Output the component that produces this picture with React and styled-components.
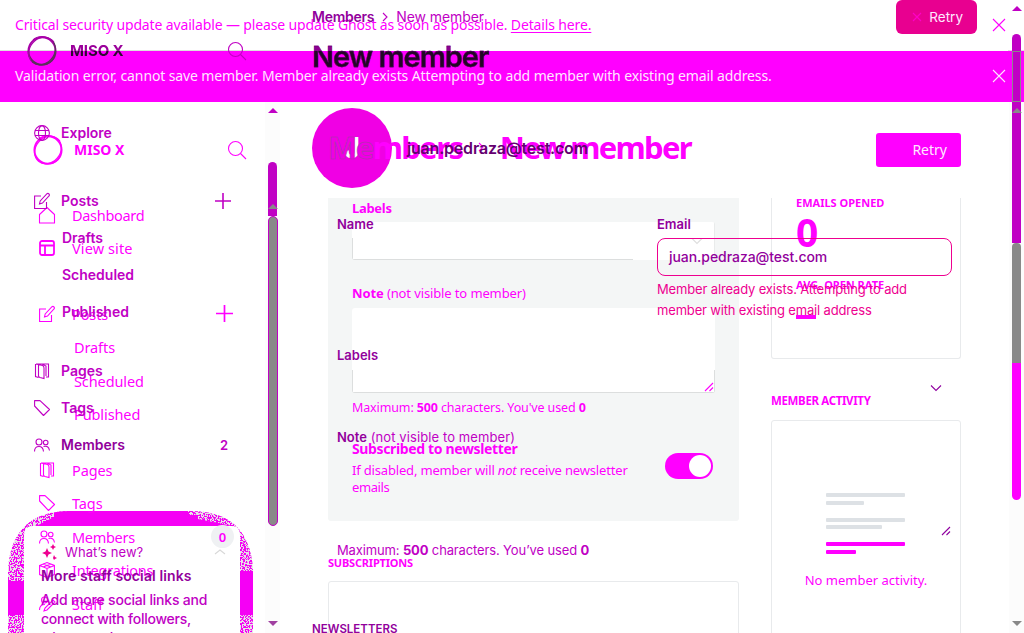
import React from "react";
import styled, { createGlobalStyle } from "styled-components";

const HOT = "#ff00ff";
const PLUM = "#c000c4";
const DEEP = "#92009c";
const ROSE = "#ee0090";

const Global = createGlobalStyle`
  *{box-sizing:border-box}
  html,body{margin:0;height:633px;overflow:hidden;background:#fff}
  h1,h2,p{margin:0}
`;
const Stage = styled.div`position:relative;width:1024px;height:633px;overflow:hidden;background:#fff;`;
const Layer = styled.div`position:absolute;inset:0;display:flex;overflow:hidden;
  flex-direction:${p => (p.$column ? "column" : "row")};
  font-family:${p => (p.$inter ? 'Inter, "Liberation Sans", sans-serif' : '"Noto Sans", "Open Sans", sans-serif')};
  color:${p => (p.$inter ? PLUM : HOT)};`;
const Text = styled.span`font-size:${p => p.$size || 14}px;font-weight:${p => p.$weight || 400};
  letter-spacing:${p => p.$track || 0}px;color:${p => p.$color || "inherit"};white-space:nowrap;
  line-height:${p => p.$line || 20}px;`;
const Svg = styled.svg`display:block;flex:none;overflow:visible;fill:none;stroke:currentColor;stroke-width:${p => p.$w || 1.1};`;

/* banners */
const Alert = styled.div`height:51px;flex:none;display:flex;align-items:center;justify-content:space-between;
  padding:0 19px ${p => (p.$solid ? 2 : 2)}px 15px;color:${p => (p.$solid ? "#ffe6ff" : HOT)};
  background:${p => (p.$solid ? HOT : "linear-gradient(#dedede,#dedede) 0 100%/280px 1px no-repeat,linear-gradient(#dedede,#dedede) 100% 100%/16px 1px no-repeat,#fff")};`;
const Link = styled.u`text-underline-offset:2px;text-decoration-thickness:1px;`;
const Body = styled.div`display:flex;flex:1;min-height:0;`;

/* sidebars */
const Side = styled.aside`width:280px;flex:none;display:flex;flex-direction:column;border-right:1px solid ${p => (p.$line ? "#e6e6e6" : "transparent")};`;
const SideHead = styled.div`height:${p => p.$h}px;flex:none;display:flex;align-items:center;padding:0 ${p => p.$right}px 0 ${p => p.$left}px;
  & > :last-child{margin-left:auto;}`;
const Brand = styled(Text)`margin-left:${p => p.$gap}px;`;
const SplitBrand = styled(Brand)`background:linear-gradient(#9a009a 50%,#2c0a30 50%);background-clip:text;color:transparent;`;
const Group = styled.nav`padding:0 ${p => p.$right}px 0 ${p => p.$left}px;margin-top:${p => p.$top || 0}px;`;
const Item = styled.div`height:${p => p.$h}px;display:flex;align-items:center;padding-left:${p => p.$inset || 0}px;
  gap:${p => p.$gap || 0}px;& > .end{margin-left:auto;}`;
const Badge = styled.div`width:23px;height:23px;border-radius:50%;background:#eff1f3;display:flex;align-items:center;justify-content:center;
  margin-right:2px;`;
const Remnant = styled.div`width:14px;height:3px;margin:0 0 13px 35px;background:#a800b0;border-radius:0 0 3px 3px;`;
const News = styled.section`margin-top:63px;padding:16px 54px 0 41px;display:flex;flex-direction:column;`;
const NewsHead = styled.div`display:flex;align-items:center;gap:8px;height:20px;margin-bottom:4px;& > :last-child{margin-left:auto;}`;
const Glow = styled.svg`position:absolute;left:8px;top:511px;`;

/* page with the newsletter panel */
const Main = styled.main`flex:1;min-width:0;padding:0 63px 0 48px;`;
const Head = styled.header`height:96px;display:flex;align-items:center;justify-content:space-between;`;
const Title = styled.h1`margin:0 0 6px;display:flex;align-items:center;gap:13px;font-size:31px;line-height:40px;font-weight:700;letter-spacing:-1.55px;white-space:nowrap;`;
const Tight = styled.span`letter-spacing:-1.75px;margin-left:1px;`;
const Etched = styled.span`color:#ee00e4;-webkit-text-stroke:0.6px #a040a0;`;
const Button = styled.div`width:${p => p.$w}px;height:34px;border-radius:${p => p.$r}px;background:${p => p.$bg};color:#ffe8ff;
  display:flex;align-items:center;justify-content:space-between;padding:0 14px 0 ${p => p.$left}px;`;
const Columns = styled.div`display:grid;grid-template-columns:411px 190px;column-gap:32px;`;
const Panel = styled.section`height:323px;background:#f4f6f6;border-radius:0 0 3px 3px;padding:0 24px;display:flex;flex-direction:column;`;
const Field = styled.div`height:38px;margin:4px 0 23px;background:
  linear-gradient(#dcdede,#dcdede) 0 100%/281px 1px no-repeat,linear-gradient(#dcdede,#dcdede) 0 100%/1px 22px no-repeat,
  linear-gradient(#e9ebeb,#e9ebeb) 100% 0/1px 37px no-repeat,#fff;border-radius:3px;
  display:flex;align-items:center;justify-content:flex-end;padding-right:13px;color:#dedede;`;
const Area = styled.div`height:85px;margin:5px 0 5px;background:linear-gradient(#dcdede,#dcdede) 0 100%/100% 1px no-repeat,
  linear-gradient(#dcdede,#dcdede) 0 100%/1px 23px no-repeat,linear-gradient(#dcdede,#dcdede) 100% 100%/1px 23px no-repeat,#fff;
  border-radius:3px;display:flex;align-items:flex-end;justify-content:flex-end;padding:2px;`;
const SwitchRow = styled.div`margin-top:21px;display:flex;justify-content:space-between;`;
const Stack = styled.div`display:flex;flex-direction:column;`;
const Toggle = styled.div`width:48px;height:26px;margin:14px 2px 0 0;border-radius:13px;background:${HOT};padding:2px;display:flex;justify-content:flex-end;
  &::after{content:"";width:22px;height:22px;border-radius:50%;background:#fff;}`;
const Caption = styled(Text)`display:block;margin-top:${p => p.$top || 0}px;`;
const Card = styled.div`border:1px solid #e8eaec;height:${p => p.$h}px;border-top-width:${p => (p.$open ? 0 : 1)}px;
  border-radius:${p => (p.$open ? "0 0 3px 3px" : "3px")};padding:0 24px;margin-top:${p => p.$top || 0}px;
  display:flex;flex-direction:column;align-items:${p => (p.$center ? "center" : "flex-start")};`;
const Dash = styled.div`width:20px;height:4px;background:${HOT};margin-top:20px;`;
const Lines = styled.div`width:79px;height:60px;margin:72px 2px 17px 0;display:flex;flex-direction:column;`;
const Bar = styled.i`height:4px;flex:none;width:${p => p.$w}px;margin-bottom:${p => p.$gap}px;background:${p => p.$hot ? HOT : "#dde1e5"};border-radius:1px;`;

/* page with the two-column form */
const Form = styled.main`flex:1;min-width:0;padding:0 47px 0 32px;display:flex;flex-direction:column;`;
const FormTop = styled.div`display:flex;justify-content:space-between;height:108px;flex:none;`;
const Crumbs = styled.div`display:flex;align-items:center;height:20px;gap:6px;margin-top:7px;`;
const FormTitle = styled.h1`font-size:29px;font-weight:600;letter-spacing:-1px;line-height:34px;margin-top:13px;white-space:nowrap;
  background:linear-gradient(#8c0090 11px,#220626 11px);background-clip:text;color:transparent;-webkit-text-stroke:0.3px #60006a;`;
const Person = styled.div`display:flex;align-items:center;height:80px;flex:none;padding-left:${p => p.$inset || 0}px;`;
const Avatar = styled.div`width:80px;height:80px;border-radius:50%;background:#f000e4;color:#fff;display:flex;align-items:center;justify-content:center;
  font:600 28px Inter,sans-serif;`;
const AvatarLayer = styled.div`position:absolute;left:312px;top:108px;`;
const Fields = styled.div`display:grid;grid-template-columns:295px 295px;column-gap:25px;padding-left:25px;margin-top:26px;height:131px;flex:none;`;
const EmailInput = styled.div`height:38px;width:295px;margin:4px 0 3px;border:1px solid ${ROSE};border-radius:8px;display:flex;align-items:center;padding-left:11px;`;
const Row = styled.div`flex:none;height:${p => p.$h}px;padding:0 ${p => p.$r || 0}px 0 25px;display:flex;justify-content:space-between;`;
const Handle = styled.div`padding-top:${p => p.$t}px;color:#9000a0;`;

/* scrollbars */
const Rail = styled.div`position:absolute;top:${p => p.$top}px;bottom:0;left:${p => p.$x}px;width:15px;background:${p => (p.$clear ? "transparent" : "#fcfcfc")};
  display:flex;flex-direction:column;align-items:center;`;
const Tip = styled.i`width:0;height:0;border:5px solid transparent;border-top-width:${p => (p.$down ? 5 : 0)}px;border-bottom-width:${p => (p.$down ? 0 : 5)}px;
  border-${p => (p.$down ? "top" : "bottom")}-color:${p => p.$c};margin-top:${p => p.$t}px;flex:none;`;
const Thumb = styled.i`width:${p => p.$w || 9}px;height:${p => p.$h}px;margin-top:${p => p.$t || 0}px;flex:none;background:${p => p.$c};
  border-radius:${p => p.$r || "0"};border:${p => p.$edge || "0"};`;

const Cross = ({ s = 12 }) => <Svg width={s} height={s} viewBox="0 0 12 12"><path d="M0 0L12 12M12 0L0 12" /></Svg>;
const Search = () => <Svg width="18" height="18" viewBox="0 0 18 18"><circle cx="7.5" cy="7.5" r="7" /><path d="M12.5 12.5L18 18" /></Svg>;
const Plus = ({ s = 17 }) => <Svg className="end" width={s} height={s} viewBox="0 0 17 17" $w="1.7"><path d="M8.5 0V17M0 8.5H17" /></Svg>;
const Chevron = ({ d = "down" }) => <Svg width="10" height="10" viewBox="0 0 10 10"><path d={{ down: "M0 2.5L5 7.5L10 2.5", right: "M3 1L7 5L3 9" }[d]} /></Svg>;
const Grip = () => <Svg width="8" height="8" viewBox="0 0 8 8"><path d="M0 8L8 0M4.5 8L8 4.5" /></Svg>;
const Logo = ({ split }) => (
  <Svg width="30" height="30" viewBox="0 0 30 30">
    <defs><linearGradient id="ink" gradientUnits="userSpaceOnUse" x1="0" y1="0" x2="0" y2="30"><stop offset=".5" stopColor="#a800a8" /><stop offset=".5" stopColor="#5c305c" /></linearGradient></defs>
    <g stroke={split ? "url(#ink)" : HOT}>
      <circle cx="15" cy="15" r="13.6" strokeWidth="1.9" />
      <ellipse cx="15" cy="15" rx="14.7" ry="12.3" strokeWidth="1.2" transform="rotate(-50 15 15)" />
      <path d="M6 4C11 -1 20 -1 27 6M4 24C10 31 22 31 27 22" strokeWidth="1.1" />
    </g>
  </Svg>
);
const shapes = {
  home: <path d="M.5 16V7.5L8 .5L15.500 7.500V16Z" strokeLinejoin="round" />,
  site: <><rect x="1" y="1" width="14" height="14" rx="2" /><path d="M1 5.500H15M6 5.500V15" /></>,
  pen: <path d="M7 3H.6V15.500H12.500V9M5.500 11L6.200 8L13 .7Q14 0 15 1Q16 2 15 3L8.500 10Z" />,
  pages: <path d="M2 1H14.500V14H12M1.500 1V13.500L4.500 14.500M2 1L8.500 2.500Q10 3 10 5V15.500L6 14.500Q4.500 14 4.500 13V1.500M8 1L12 3V13" />,
  tag: <path d="M.6 .6H6L15.500 9.500L9.500 15.500L.6 6Z" strokeLinejoin="round" />,
  people: <><circle cx="5" cy="5" r="3" /><circle cx="11.700" cy="5.500" r="2.300" /><path d="M.5 14.500Q.5 9.500 5 9.500Q9 9.500 9.500 14.500M9.500 9.500Q14.500 8 15.500 13.500" /></>,
  cube: <path d="M.6 3.500L8 .6L15.400 3.500V12.500L8 15.400L.6 12.500ZM.6 3.500L8 6.500L15.400 3.500M8 6.500V15.400M4 2L12 5M12 2L4 5" />,
  staff: <><circle cx="5.500" cy="4" r="3" /><path d="M.5 14Q.5 8.500 6 8.500M5 15L6 12L14 4L16 6L8 14Z" /></>,
  globe: <><circle cx="8" cy="8" r="7.400" /><ellipse cx="8" cy="8" rx="3.500" ry="7.400" /><path d="M1 5.500H15M1 10.500H15" /></>,
};
const Icon = ({ name, w }) => <Svg width="16" height="16" viewBox="0 0 16 16" $w={w}>{shapes[name]}</Svg>;

const NavA = ({ icon, label, children, track = -0.1, w }) => (
  <Item $h={33.5} $gap={icon ? 17 : 0} $inset={icon ? 0 : 35}>{icon && <Icon name={icon} w={w} />}<Text $size={14.5} $track={track}>{label}</Text>{children}</Item>
);
const NavB = ({ icon, label, children, color }) => (
  <Item $h={37} $gap={icon ? 11 : 0} $inset={icon ? 0 : 28}>{icon && <Icon name={icon} />}<Text $weight={600} $color={color}>{label}</Text>{children}</Item>
);

const CardGlow = () => (
  <Glow width="245" height="122" viewBox="0 0 245 122">
    <defs>
      <filter id="grain" x="0" y="0" width="100%" height="100%">
        <feTurbulence type="fractalNoise" baseFrequency="0.75" numOctaves="2" seed="4" result="n" />
        <feColorMatrix in="n" values="0 0 0 0 0  0 0 0 0 0  0 0 0 0 0  30 0 0 0 -14.500" result="m" />
        <feComposite in="SourceGraphic" in2="m" operator="in" />
      </filter>
      <clipPath id="ring"><path clipRule="evenodd" d="M0 122V58Q4 0 62 0H183Q241 0 245 58V122ZM16 122V24Q16 15 25 15H224Q232 15 232 24V122Z" /></clipPath>
    </defs>
    <g clipPath="url(#ring)">
      <rect width="245" height="122" fill="#e6e6e6" />
      <rect width="245" height="122" fill="#f500f5" filter="url(#grain)" />
      <path d="M48 4H190V15H40ZM0 70H16V104H0ZM232 60H245V104H232ZM46 0H180V5H46Z" fill="#f500f5" />
      <path d="M28 15L52 3V15ZM190 8L225 15H190Z" fill="#f500f5" />
    </g>
  </Glow>
);

export default function App() {
  return (
    <Stage>
      <Global />
      <CardGlow />
      <AvatarLayer><Avatar>J</Avatar></AvatarLayer>

      <Layer $column>
        <Alert><Text $size={14} $track={-0.14}>Critical security update available — please update Ghost as soon as possible. <Link>Details here.</Link></Text><Cross /></Alert>
        <Alert $solid><Text $size={14} $track={-0.12}>Validation error, cannot save member. Member already exists Attempting to add member with existing email address.</Text><Cross /></Alert>
        <Body>
          <Side $line>
            <SideHead $h={96} $left={33} $right={33}><Logo /><Brand $gap={11} $size={14} $weight={700}>MISO X</Brand><Search /></SideHead>
            <Group $left={39} $right={46}>
              <NavA icon="home" label="Dashboard" track={-0.3} /><NavA icon="site" label="View site" w={1.8} track={0.1} />
            </Group>
            <Group $left={39} $right={46} $top={32}>
              <NavA icon="pen" label="Posts"><Plus /></NavA>
              <NavA label="Drafts" /><NavA label="Scheduled" /><NavA label="Published" />
            </Group>
            <Group $left={39} $right={43} $top={22}>
              <NavA icon="pages" label="Pages" /><NavA icon="tag" label="Tags" />
              <NavA icon="people" label="Members" track={-0.3}><Badge className="end"><Text $size={13} $weight={600}>0</Text></Badge></NavA>
              <NavA icon="cube" label="Integrations" track={-0.2} /><NavA icon="staff" label="Staff" />
            </Group>
          </Side>
          <Main>
            <Head>
              <Title><span><Etched>Me</Etched>mbers</span><Chevron d="right" /><Tight>New member</Tight></Title>
              <Button $w={85} $r={3} $bg={HOT} $left={20}><i /><Text $size={14}>Retry</Text></Button>
            </Head>
            <Columns>
              <div>
                <Panel>
                  <Text $size={13} $weight={700} $track={-0.3}>Labels</Text>
                  <Field><Chevron /></Field>
                  <Text $size={13} $track={-0.12}><b>Note</b> (not visible to member)</Text>
                  <Area><Grip /></Area>
                  <Text $size={12.5} $track={-0.13}>Maximum: <b>500</b> characters. You've used <b>0</b></Text>
                  <SwitchRow>
                    <Stack>
                      <Text $size={14} $weight={700} $track={-0.36}>Subscribed to newsletter</Text>
                      <Caption $size={13} $line={17} $top={3} $track={-0.17}>If disabled, member will <em>not</em> receive newsletter</Caption>
                      <Text $size={13} $line={17} $track={-0.4}>emails</Text>
                    </Stack>
                    <Toggle />
                  </SwitchRow>
                </Panel>
                <Caption $size={11} $weight={700} $top={32} $track={-0.2}>SUBSCRIPTIONS</Caption>
                <Card $h={90} $top={8} />
              </div>
              <div>
                <Card $h={161} $open>
                  <Text $size={11} $weight={700} $line={10}>EMAILS OPENED</Text>
                  <Text $size={39} $weight={700} $line={47} $track={-1}>0</Text>
                  <Caption $size={11} $weight={700} $top={20}>AVG. OPEN RATE</Caption>
                  <Dash />
                </Card>
                <Caption $size={11.5} $weight={700} $top={32} $track={-0.35}>MEMBER ACTIVITY</Caption>
                <Card $h={230} $top={9} $center>
                  <Lines><Bar $w={79} $gap={4} /><Bar $w={38} $gap={13} /><Bar $w={79} $gap={3} /><Bar $w={56} $gap={13} /><Bar $w={79} $gap={4} $hot /><Bar $w={30} $gap={0} $hot /></Lines>
                  <Text $size={13}>No member activity.</Text>
                </Card>
              </div>
            </Columns>
          </Main>
        </Body>
      </Layer>

      <Layer $inter>
        <Side>
          <SideHead $h={101} $left={27} $right={33}><Logo split /><SplitBrand $gap={13} $size={15} $weight={700} $track={-0.1}>MISO X</SplitBrand><Search /></SideHead>
          <Remnant />
          <Group $left={34} $right={48}><NavB icon="globe" label="Explore" /></Group>
          <Group $left={34} $right={48} $top={31}>
            <NavB icon="pen" label="Posts"><Plus s={16} /></NavB><NavB label="Drafts" /><NavB label="Scheduled" /><NavB label="Published" />
          </Group>
          <Group $left={34} $right={51} $top={22}>
            <NavB icon="pages" label="Pages" /><NavB icon="tag" label="Tags" />
            <NavB icon="people" label="Members" color={DEEP}><Text className="end" $size={13} $weight={600}>2</Text></NavB>
          </Group>
          <News>
            <NewsHead>
              <Svg width="16" height="16" viewBox="0 0 16 16" color={ROSE}><path fill={ROSE} stroke="none" d="M6 4L7.500 7.500L11 9L7.500 10.500L6 14L4.500 10.500L1 9L4.500 7.500ZM12 0L13 2L15 3L13 4L12 6L11 4L9 3L11 2ZM13 11L14 13L16 14L14 15L13 16L12 14Z" /></Svg>
              <Text $size={13} $track={0.1}>What’s new?</Text><Svg width="10" height="6" viewBox="0 0 10 6" color="#d8d8d8"><path d="M0 5L5 1L10 5" /></Svg>
            </NewsHead>
            <Text $size={14} $weight={600} $color={DEEP} $track={0.12}>More staff social links</Text>
            <Stack><Caption $weight={500} $line={19} $top={4} $track={-0.2}>Add more social links and</Caption><Text $weight={500} $line={19} $track={-0.25}>connect with followers,</Text><Text $weight={500} $line={19} $track={-0.25}>wherever they are.</Text></Stack>
          </News>
        </Side>
        <Form>
          <FormTop>
            <div>
              <Crumbs><Text $size={14} $weight={600} $color={DEEP} $track={-0.25}>Members</Text><Chevron d="right" /><Text $size={14} $track={-0.1}>New member</Text></Crumbs>
              <FormTitle>New member</FormTitle>
            </div>
            <Button $w={81} $r={6} $bg="#e80090" $left={17}><Svg width="8" height="8" viewBox="0 0 8 8" color="#ff00c8"><path d="M0 0L8 8M8 0L0 8" /></Svg><Text $size={13.5}>Retry</Text></Button>
          </FormTop>
          <Person $inset={95}><Text $size={16} $weight={600} $color="#640070" $track={-0.2}>juan.pedraza@test.com</Text></Person>
          <Fields>
            <Stack><Text $size={13} $weight={600} $color={DEEP}>Name</Text></Stack>
            <Stack>
              <Text $size={13} $weight={600} $color={DEEP}>Email</Text>
              <EmailInput><Text $size={14} $weight={500} $color={DEEP} $track={-0.05}>juan.pedraza@test.com</Text></EmailInput>
              <Text $size={13} $line={21} $color={ROSE} $track={-0.15}>Member already exists. Attempting to add</Text>
              <Text $size={13} $line={21} $color={ROSE} $track={-0.17}>member with existing email address</Text>
            </Stack>
          </Fields>
          <Row $h={82} $r={36}><Text $size={13} $weight={600} $color={DEEP}>Labels</Text><Handle $t={38}><Chevron /></Handle></Row>
          <Row $h={113} $r={27}><Text $size={13} $track={0.1}><Text as="b" $size={13} $weight={600} $color={DEEP}>Note</Text> (not visible to member)</Text><Handle $t={100}><Grip /></Handle></Row>
          <Row $h={79}><Text $size={13} $track={-0.14}>Maximum: <b>500</b> characters. You’ve used <b>0</b></Text></Row>
          <Text $size={11.5} $weight={600} $color={DEEP}>NEWSLETTERS</Text>
        </Form>
      </Layer>

      <Rail $x={265} $top={102}><Tip $c={PLUM} $t={6} /><Thumb $c={PLUM} $t={49} $h={54} $r="5px 5px 0 0" /><Thumb $w={10} $h={310} $c="#898989" $edge={"1px solid " + PLUM} $r="5px" /><Tip $down $c="#a040a0" $t={95} /></Rail>
      <Rail $x={265} $top={198} $clear><Tip $c="#898989" $t={6} /></Rail>
      <Rail $x={1009} $top={102} />
      <Rail $x={1009} $top={0} $clear><Tip $c={PLUM} $t={6} /><Thumb $c={PLUM} $t={23} $h={17} $r="5px 5px 0 0" /><Thumb $c={PLUM} $h={51} $edge="1px solid #898989" /><Thumb $c={PLUM} $h={141} /><Thumb $c="#898989" $h={120} $r="4px 4px 0 0" /><Thumb $c={HOT} $h={137} $r="0 0 5px 5px" /><Tip $down $c="#888" $t={121} /></Rail>
      <Rail $x={1009} $top={102} $clear><Tip $c="#898989" $t={6} /></Rail>
    </Stage>
  );
}
